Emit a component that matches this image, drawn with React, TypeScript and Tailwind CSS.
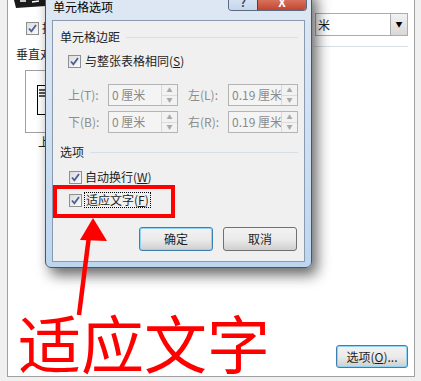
import React from 'react';

const ui = { fontFamily: '"Noto Sans CJK SC", "Noto Sans", sans-serif' };

function CheckBox({ className = '' }: { className?: string }) {
  return (
    <span
      className={`inline-flex h-[13px] w-[13px] shrink-0 items-center justify-center border border-[#8e8f8f] bg-gradient-to-br from-[#dcdcdc] to-[#fbfbfb] ${className}`}
    >
      <svg viewBox="0 0 11 11" className="h-[11px] w-[11px]">
        <path d="M2 5.5 L4.4 8.3 L9 2" fill="none" stroke="#4a5f97" strokeWidth="1.8" />
      </svg>
    </span>
  );
}

function Spin() {
  return (
    <div className="flex h-full w-[16px] flex-col border-l border-[#d8d8d8] bg-[#f2f2f2]">
      <div className="flex flex-1 items-center justify-center border-b border-[#dcdcdc]">
        <span className="text-[6px] leading-none text-[#a8a8a8]">▲</span>
      </div>
      <div className="flex flex-1 items-center justify-center">
        <span className="text-[6px] leading-none text-[#a8a8a8]">▼</span>
      </div>
    </div>
  );
}

function Field({ label, value }: { label: string; value: string }) {
  return (
    <div className="flex items-center">
      <span className="w-[40px] text-[12px] text-[#8d8d8d]">{label}</span>
      <div className="flex h-[22px] w-[70px] items-center border border-[#b4b4b4] bg-[#f4f4f4]">
        <span className="flex-1 overflow-hidden whitespace-nowrap pl-[3px] text-[12px] text-[#8a8a8a]">{value}</span>
        <Spin />
      </div>
    </div>
  );
}

function GroupHeader({ text }: { text: string }) {
  return (
    <div className="flex h-[16px] items-center gap-[6px] pl-[7px] pr-[6px]">
      <span className="text-[12px] leading-none text-[#1e1e1e]">{text}</span>
      <div className="h-px flex-1 bg-[#d5dfe5]" />
    </div>
  );
}

function Button({ text, focused }: { text: string; focused?: boolean }) {
  return (
    <button
      type="button"
      className={`flex h-[24px] w-[74px] items-center justify-center rounded-[3px] border bg-gradient-to-b from-[#f2f2f2] via-[#ebebeb] to-[#cfcfcf] text-[12px] text-[#1e1e1e] ${
        focused ? 'border-[#3c7fb1] shadow-[inset_0_0_0_1px_#8fd3f5]' : 'border-[#707070]'
      }`}
    >
      {text}
    </button>
  );
}

export default function App() {
  return (
    <div className="relative h-[381px] w-[421px] overflow-hidden bg-[#f0f0f0]" style={ui}>
      {/* background properties window */}
      <div className="h-full pb-[4px] pl-[7px] pr-[6px]">
        <div className="flex h-full flex-col border-x border-b border-[#a0a0a0] bg-white">
          <div className="flex h-[48px] items-start justify-between pl-[4px] pr-[6px]">
            <div className="flex flex-col">
              <svg viewBox="0 0 36 8" className="h-[8px] w-[36px]">
                <path d="M2 0 L36 0 L34 6 L4 8 Z" fill="#1a1a1a" />
                <path d="M8 1 L14 1 M20 2 L27 1" stroke="#ffffff" strokeWidth="1.5" />
              </svg>
              <div className="mt-[11px] flex items-center gap-[3px] pl-[14px]">
                <CheckBox />
                <span className="text-[12px] text-[#1e1e1e]">指定宽度</span>
              </div>
            </div>
            <div className="mt-[13px] flex h-[23px] w-[93px] items-center border border-[#acacac] bg-white">
              <span className="flex-1 pl-[2px] text-[12px] text-[#1e1e1e]">米</span>
              <div className="flex h-full w-[17px] items-center justify-center border-l border-[#acacac] bg-gradient-to-b from-[#f2f2f2] to-[#d8d8d8]">
                <span className="text-[7px] leading-none text-black">▼</span>
              </div>
            </div>
          </div>
          <div className="flex items-start justify-between pr-[6px]">
            <span className="pl-[8px] text-[12px] leading-none text-[#1e1e1e]">垂直对齐方式</span>
            <div className="mt-[-2px] h-px w-[94px] bg-[#d5dfe5]" />
          </div>
          <div className="ml-[17px] mt-[10px] h-[63px] w-[60px] border border-[#a0a0a0] pl-[11px] pt-[14px]">
            <div className="h-[30px] w-[16px] border border-black bg-white pl-[1px] pt-[3px]">
              <div className="h-[2px] w-[8px] bg-[#555]" />
              <div className="mt-[1px] h-[2px] w-[8px] bg-[#555]" />
              <div className="mt-[1px] h-[2px] w-[8px] bg-[#555]" />
            </div>
          </div>
          <span className="ml-[30px] mt-[3px] text-[12px] leading-none text-[#1e1e1e]">上</span>
          <div className="flex-1" />
          <div className="flex justify-end pb-[8px] pr-[6px]">
            <button
              type="button"
              className="flex h-[23px] w-[72px] items-center justify-center rounded-[3px] border border-[#3c7fb1] bg-gradient-to-b from-[#f2f2f2] via-[#ebebeb] to-[#cfcfcf] text-[12px] text-[#1e1e1e] shadow-[inset_0_0_0_1px_#8fd3f5]"
            >
              选项(<span className="underline">O</span>)...
            </button>
          </div>
        </div>
      </div>

      {/* cell options dialog */}
      <div className="absolute left-[45px] top-[-12px] flex h-[280px] w-[267px] flex-col rounded-[6px] border border-[#4b5563] bg-gradient-to-b from-[#dfe8f3] via-[#cfe0f3] to-[#bcd6f0] shadow-[5px_7px_14px_rgba(0,0,0,0.6)]">
        <div className="relative h-[31px] shrink-0">
          <span className="absolute left-[7px] top-[12px] text-[12px] leading-none text-black">单元格选项</span>
          <div className="absolute right-[4px] top-0 flex h-[22px] overflow-hidden rounded-b-[4px] border border-t-0 border-[#5a6a80]">
            <div className="flex w-[28px] items-end justify-center bg-gradient-to-b from-[#e6eef8] to-[#c5d6ea] pb-[2px]">
              <span className="text-[11px] font-bold leading-none text-[#3d4b5f]">?</span>
            </div>
            <div className="flex w-[49px] items-end justify-center border-l border-[#6a3a30] bg-gradient-to-b from-[#e8a090] to-[#c4432b] pb-[2px]">
              <span className="text-[12px] font-bold leading-none text-white">X</span>
            </div>
          </div>
        </div>
        <div className="mx-[6px] mb-[5px] flex flex-1 flex-col border border-[#8a9bb0] bg-[#f0f0f0]">
          <div className="mt-[8px]">
            <GroupHeader text="单元格边距" />
          </div>
          <div className="mt-[8px] flex h-[16px] items-center gap-[4px] pl-[15px]">
            <CheckBox />
            <span className="text-[12px] text-[#1e1e1e]">
              与整张表格相同(<span className="underline">S</span>)
            </span>
          </div>
          <div className="mt-[15px] flex gap-[10px] pl-[15px]">
            <Field label="上(T):" value="0 厘米" />
            <Field label="左(L):" value="0.19 厘米" />
          </div>
          <div className="mt-[5px] flex gap-[10px] pl-[15px]">
            <Field label="下(B):" value="0 厘米" />
            <Field label="右(R):" value="0.19 厘米" />
          </div>
          <div className="mt-[11px]">
            <GroupHeader text="选项" />
          </div>
          <div className="mt-[9px] flex h-[16px] items-center gap-[3px] pl-[16px]">
            <CheckBox />
            <span className="text-[12px] text-[#1e1e1e]">
              自动换行(<span className="underline">W</span>)
            </span>
          </div>
          <div className="mt-[7px] flex h-[16px] items-center gap-[2px] pl-[16px]">
            <CheckBox />
            <span className="border border-dotted border-black px-px text-[12px] leading-[14px] text-[#1e1e1e]">
              适应文字(<span className="underline">F</span>)
            </span>
          </div>
          <div className="mt-[19px] flex justify-end gap-[10px] pr-[7px]">
            <Button text="确定" focused />
            <Button text="取消" />
          </div>
        </div>
      </div>

      {/* annotation */}
      <div className="absolute left-[53px] top-[185px] h-[33px] w-[122px] border-[4px] border-[#ff0000]" />
      <svg className="absolute left-0 top-0" width="421" height="381" viewBox="0 0 421 381">
        <path d="M79 315 L89 236" stroke="#ff0000" strokeWidth="4.5" fill="none" />
        <path d="M93 218 L107 241 L80 240 Z" fill="#ff0000" />
      </svg>
      <span
        className="absolute left-[18px] top-[309px] whitespace-nowrap text-[63px] leading-none text-[#ff0000]"
        style={{ fontFamily: '"Noto Sans CJK SC", serif' }}
      >
        适应文字
      </span>
    </div>
  );
}
